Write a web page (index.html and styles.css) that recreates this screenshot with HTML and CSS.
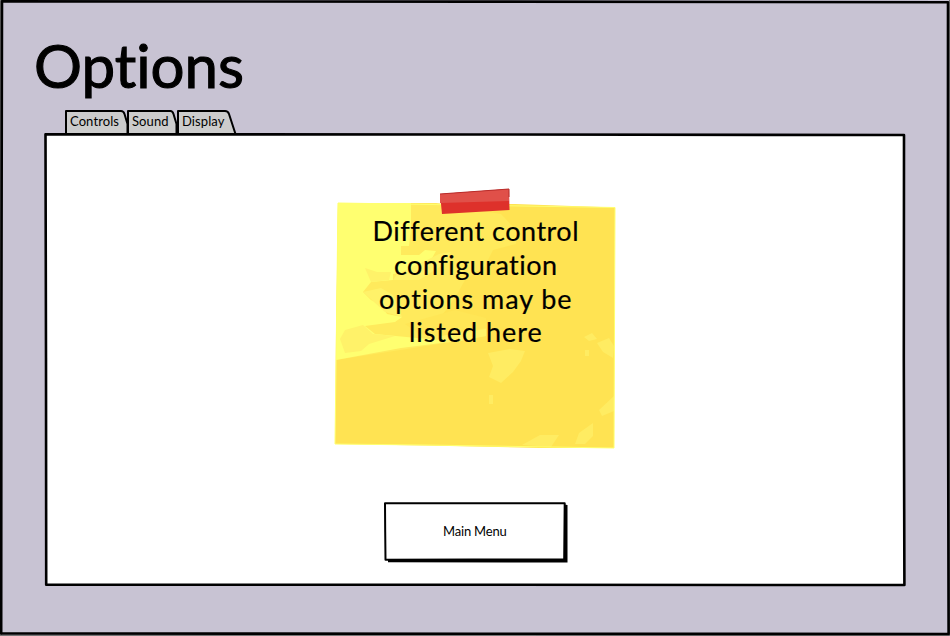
FILE: index.html
```html
<!DOCTYPE html>
<html lang="en">
<head>
<meta charset="utf-8">
<title>Options</title>
<link rel="stylesheet" href="styles.css">
</head>
<body>
<main class="screen">
  <svg class="sketch" viewBox="0 0 950 636" aria-hidden="true">
    <path class="gap" d="M0 0H2V636H0Z M0 635H950V636H0Z M949 0H950V636H949Z"/>
    <path class="ink" d="M2 1.4L480 1.6L948 2.2L947.9 320L948.6 634L480 633.8L1.2 633.4L1.4 320Z"/>
  </svg>
  <h1 class="title">Options</h1>
  <nav class="tabs">
    <a class="tab tab-controls"><svg class="sketch" viewBox="0 0 63 25" aria-hidden="true"><path class="tab-shape" d="M1 24V1H56Q58.500 1 59.500 4L62.500 14V24"/></svg><span>Controls</span></a>
    <a class="tab tab-sound"><svg class="sketch" viewBox="0 0 50 25" aria-hidden="true"><path class="tab-shape" d="M1 24V1H43.500Q45.500 1 46.500 4L49.500 14V24"/></svg><span>Sound</span></a>
    <a class="tab tab-display"><svg class="sketch" viewBox="0 0 60 25" aria-hidden="true"><path class="tab-shape" d="M1 24V1H48Q51 1 52 4L58.500 24"/></svg><span>Display</span></a>
  </nav>
  <section class="panel">
    <svg class="sketch" viewBox="0 0 862 454" aria-hidden="true">
      <path class="ink paper" d="M1.500 1.300L430 1.500L860 2L859.800 225L860.400 452L430 451.800L2.200 451.800L2 225Z"/>
    </svg>
    <div class="note">
      <svg class="sketch" viewBox="0 0 282 262" aria-hidden="true">
        <path fill="#ffe352" d="M3 15L180 16L280 19.500L279 260L205 260L90 257.500L0 256L1 145Z"/>
        <path fill="#ffea5c" d="M3 15H101L123 19L166 26L181 42L181 56L158 62L150 78L130 92L120 110L108 126L130 134L151 136V148L104 156L1 172Z"/>
        <path fill="#ffff70" d="M3 15H76V40L74 58H66V67H84L90 62L101 63L96 72L84 76L72 84L58 86V92L36 94L28 104L36 112L46 116L52 126L67 129L60 134L30 138L40 146L82 150L104 152L106 155L66 160L1 172Z"/>
        <path fill="#fff269" d="M30 80L42 84L56 84L54 92L36 94ZM28 104L46 100L58 107L67 129L50 124ZM5 151L10 142L28 137L38 146L60 148L34 156L26 163L10 165ZM106 148L151 141V148L126 153L106 155ZM84 76L104 66L116 64L106 78L84 92L58 92L62 86Z"/>
        <path fill="#ffe656" d="M70 136L120 122L151 130L151 140L104 148L84 146Z"/>
        <path fill="#ffec62" d="M153 165L175 161L190 163L186 173L178 184L166 195L154 189L158 178ZM154 207H158V216H154ZM249 149L257 145L262 151L254 153ZM250 162H254V168H250ZM262 155L274 150L279 158L278 170L268 164ZM264 222L279 208V223L267 228ZM187 257L205 247L224 247L216 259ZM240 256L244 245L258 235V248L250 256Z"/>
        <path fill="none" stroke="#ffff70" d="M3 15L280 19.500L279 260L90 257L0 256Z"/>
        <path fill="#de312b" d="M105 6L174 1L174.500 22L107 26Z"/>
        <path fill="#e05049" d="M105 6L174 1V13L105 15Z"/>
        <path fill="none" stroke="#b92c2a" d="M105 6L174 1V9"/>
      </svg>
      <p class="note-text"><span class="l1">Different control</span><span class="l2">configuration</span><span class="l3">options may be</span><span class="l4">listed here</span></p>
    </div>
    <button class="menu-button">
      <svg class="sketch" viewBox="0 0 184 60" aria-hidden="true">
        <path d="M4 56H180V2.500L183.500 3V60.500L4 60.300Z"/>
        <path class="ink button-face" d="M1 1.200L90 1.300L180.700 1.200L180.200 57.500L90 57.500L1.500 57.800L1.200 30Z"/>
      </svg>
      <span>Main Menu</span>
    </button>
  </section>
</main>
</body>
</html>
```
FILE: styles.css
```css
* { box-sizing: border-box; }
body { margin: 0; background: #c8c3d3; color: #000; font-family: Lato, sans-serif; font-variant-ligatures: none; }
.screen { position: relative; display: flex; flex-direction: column; width: 950px; height: 636px; overflow: hidden; padding: 30px 0 0 44px; isolation: isolate; }
.sketch { position: absolute; inset: 0; width: 100%; height: 100%; z-index: -1; overflow: visible; }
.gap { fill: #777; }
.ink { fill: none; stroke: #000; stroke-width: 2.6; stroke-linejoin: round; }
.paper { fill: #fff; }
.title { margin: 0 0 0 -10px; height: 80px; font-size: 60px; line-height: 71px; font-weight: 400; -webkit-text-stroke: 1.1px #000; stroke-linejoin: round; }
.tabs { display: flex; height: 23px; margin-left: 21px; font-size: 13px; line-height: 23px; }
.tab { position: relative; height: 25px; padding-left: 5px; isolation: isolate; white-space: nowrap; letter-spacing: .1px; }
.tab-controls { width: 62px; }
.tab-sound { width: 50px; }
.tab-display { width: 60px; }
.tab-controls .sketch { width: 63px; }
.tab-shape { fill: #ccc; stroke: #000; stroke-width: 2; stroke-linejoin: round; }
.panel { position: relative; isolation: isolate; width: 862px; height: 454px; display: flex; flex-direction: column; align-items: center; padding: 55px 0 0 1.6px; }
.note { position: relative; isolation: isolate; width: 282px; height: 262px; padding-top: 26px; }
.note-text { display: flex; flex-direction: column; align-items: center; margin: 0; font-size: 27px; line-height: 33.8px; white-space: nowrap; -webkit-text-stroke: .2px #000; }
.l1, .l2 { letter-spacing: .5px; }
.l3, .l4 { letter-spacing: .95px; }
.menu-button { position: relative; isolation: isolate; width: 184px; height: 60px; margin-top: 52px; padding: 2px 3px 4px 1px; border: 0; background: none; color: #000; font: 13px Lato, sans-serif; letter-spacing: -.2px; }
.button-face { fill: #fff; stroke-width: 2; }
```
